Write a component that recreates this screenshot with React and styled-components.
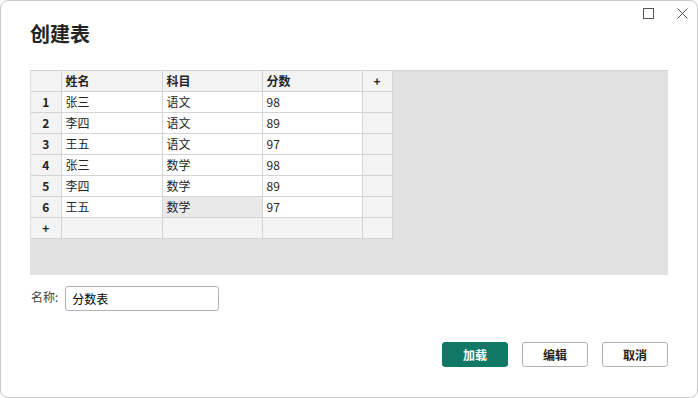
import React from 'react';
import styled, { createGlobalStyle } from 'styled-components';

const GlobalStyle = createGlobalStyle`
  html, body {
    margin: 0;
    padding: 0;
    background: #ffffff;
  }
  body {
    font-family: "Noto Sans CJK SC", "Noto Sans", sans-serif;
  }
`;

const Dialog = styled.div`
  position: relative;
  box-sizing: border-box;
  width: 698px;
  height: 398px;
  border: 1px solid #c9c9c9;
  border-radius: 8px;
  background: #fff;
  padding: 0 29px;
  display: flex;
  flex-direction: column;
  color: #252423;
`;

const Title = styled.h1`
  margin: 19px 0 0 0;
  font-size: 20px;
  line-height: 28px;
  font-weight: 700;
  color: #252423;
`;

const WindowControls = styled.div`
  position: absolute;
  top: 7px;
  right: 9px;
  display: flex;
  gap: 23px;
  align-items: center;
`;

const Grid = styled.div`
  margin-top: 22px;
  height: 205px;
  background: #e1e1e1;
  border-top: 1px solid #d2d2d2;
  box-sizing: border-box;
`;

const Table = styled.table`
  border-collapse: collapse;
  font-size: 12px;
  table-layout: fixed;
  margin-left: 1px;
`;

const Cell = styled.td`
  box-sizing: border-box;
  height: 21px;
  padding: 0 0 0 4px;
  border: 1px solid #d4d4d4;
  background: ${p => (p.$shade ? '#f3f3f3' : p.$selected ? '#e9e9e9' : '#ffffff')};
  font-weight: ${p => (p.$bold ? 700 : 400)};
  text-align: ${p => (p.$center ? 'center' : 'left')};
  width: ${p => p.$w}px;
  line-height: 19px;
  color: #252423;
  white-space: nowrap;
  &:first-child { border-left: none; }
`;

const HeadCell = styled(Cell).attrs({ as: 'th' })`
  height: 20px;
  border-top: none;
`;

const NameRow = styled.div`
  margin-top: 11px;
  display: flex;
  align-items: flex-start;
  gap: 7px;
  padding-left: 1px;
`;

const Label = styled.span`
  font-size: 12px;
  line-height: 18px;
  color: #444;
  margin-top: 2px;
`;

const Input = styled.input`
  box-sizing: border-box;
  width: 154px;
  height: 25px;
  border: 1px solid #b3b3b3;
  border-radius: 3px;
  padding: 0 6px;
  font-family: "Noto Sans CJK SC", sans-serif;
  font-size: 12px;
  color: #000;
  outline: none;
`;

const Footer = styled.div`
  margin-top: 31px;
  display: flex;
  justify-content: flex-end;
  gap: 14px;
`;

const Button = styled.button`
  box-sizing: border-box;
  width: 66px;
  height: 25px;
  border-radius: 3px;
  font-family: "Noto Sans CJK SC", sans-serif;
  font-size: 12px;
  font-weight: 700;
  padding: 0;
  cursor: pointer;
  border: 1px solid ${p => (p.$primary ? '#117865' : '#b0b0b0')};
  background: ${p => (p.$primary ? '#117865' : '#ffffff')};
  color: ${p => (p.$primary ? '#ffffff' : '#252423')};
`;

const rows = [
  ['张三', '语文', '98'],
  ['李四', '语文', '89'],
  ['王五', '语文', '97'],
  ['张三', '数学', '98'],
  ['李四', '数学', '89'],
  ['王五', '数学', '97'],
];

const widths = [30, 101, 100, 100, 30];

export default function App() {
  return (
    <>
      <GlobalStyle />
      <Dialog>
        <WindowControls>
          <svg width="11" height="11" viewBox="0 0 11 11">
            <rect x="0.5" y="0.5" width="10" height="10" fill="none" stroke="#555" strokeWidth="1" />
          </svg>
          <svg width="11" height="11" viewBox="0 0 11 11">
            <path d="M0.5 0.5 L10.5 10.5 M10.5 0.5 L0.5 10.5" stroke="#555" strokeWidth="1" />
          </svg>
        </WindowControls>
        <Title>创建表</Title>
        <Grid>
          <Table>
            <thead>
              <tr>
                <HeadCell $shade $w={widths[0]} />
                <HeadCell $shade $bold $w={widths[1]}>姓名</HeadCell>
                <HeadCell $shade $bold $w={widths[2]}>科目</HeadCell>
                <HeadCell $shade $bold $w={widths[3]}>分数</HeadCell>
                <HeadCell $shade $bold $center $w={widths[4]} style={{ paddingLeft: 0 }}>+</HeadCell>
              </tr>
            </thead>
            <tbody>
              {rows.map((r, i) => (
                <tr key={i}>
                  <Cell $shade $bold $center style={{ paddingLeft: 0 }}>{i + 1}</Cell>
                  <Cell>{r[0]}</Cell>
                  <Cell $selected={i === 5}>{r[1]}</Cell>
                  <Cell>{r[2]}</Cell>
                  <Cell $shade />
                </tr>
              ))}
              <tr>
                <Cell $shade $bold $center style={{ paddingLeft: 0 }}>+</Cell>
                <Cell $shade />
                <Cell $shade />
                <Cell $shade />
                <Cell $shade />
              </tr>
            </tbody>
          </Table>
        </Grid>
        <NameRow>
          <Label>名称:</Label>
          <Input defaultValue="分数表" />
        </NameRow>
        <Footer>
          <Button $primary>加载</Button>
          <Button>编辑</Button>
          <Button>取消</Button>
        </Footer>
      </Dialog>
    </>
  );
}
